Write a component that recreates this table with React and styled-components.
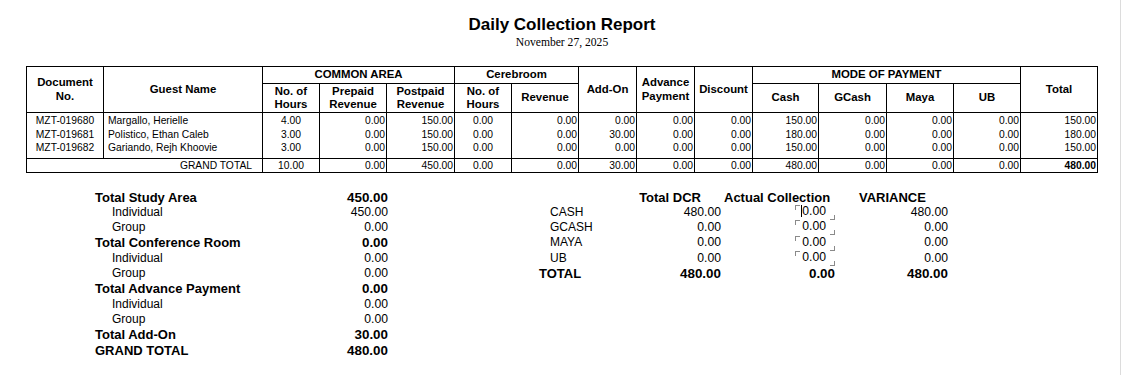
import React from "react";
import styled, { createGlobalStyle } from "styled-components";

const Global = createGlobalStyle`
  html, body { margin: 0; padding: 0; background: #fff; overflow: hidden; }
  body { font-family: "Liberation Sans", Arial, sans-serif; color: #000; }
`;

const Page = styled.div`
  width: 1120px;
  height: 375px;
  border-right: 1px solid #dcdcdc;
  background: #fff;
`;

const Report = styled.div`
  padding: 15px 0 0 26px;
  width: 1072px;
`;

const Heading = styled.header`
  text-align: center;
`;

const Title = styled.h1`
  margin: 0;
  font-size: 17px;
  line-height: 20px;
  font-weight: bold;
`;

const DateLine = styled.div`
  margin-top: 1px;
  font-family: "Liberation Serif", "Times New Roman", serif;
  font-size: 11.6px;
  line-height: 14px;
`;

const Table = styled.table`
  margin-top: 16px;
  border-collapse: collapse;
  table-layout: fixed;
  width: 1071px;
  font-size: 10.3px;
`;

const HeadCell = styled.th`
  border: 1px solid #000;
  font-size: 11.4px;
  font-weight: bold;
  line-height: 13.5px;
  text-align: center;
  vertical-align: middle;
  padding: 0 1px;
  height: ${(p) => p.$h || 0}px;
`;

const BodyRow = styled.tr`
  & > td {
    padding-top: ${(p) => (p.$first ? "1px" : "0")};
    padding-bottom: ${(p) => (p.$last ? "3px" : "0")};
  }
`;

const Cell = styled.td`
  border-left: 1px solid #000;
  border-right: 1px solid #000;
  line-height: 13.5px;
  white-space: nowrap;
  overflow: hidden;
  text-align: ${(p) => p.$align || "right"};
  padding-left: ${(p) => (p.$align === "left" ? "4px" : "1px")};
  padding-right: 1px;
`;

const TotalCell = styled.td`
  border: 1px solid #000;
  height: 13px;
  line-height: 13px;
  white-space: nowrap;
  font-weight: ${(p) => (p.$bold ? "bold" : "normal")};
  text-align: ${(p) => p.$align || "right"};
  padding: 0 ${(p) => (p.$label ? "10px" : "1px")} 0 1px;
`;

const Summary = styled.section`
  display: flex;
  margin-top: 17px;
  padding-left: 69px;
`;

const LeftBlock = styled.div`
  width: 293px;
  display: grid;
  grid-template-columns: 1fr auto;
  grid-auto-rows: 15.33px;
  align-items: center;
`;

const SumLabel = styled.div`
  font-size: ${(p) => (p.$bold ? "13px" : "12px")};
  font-weight: ${(p) => (p.$bold ? "bold" : "normal")};
  padding-left: ${(p) => (p.$indent ? "17px" : "0")};
  line-height: 15.33px;
  white-space: nowrap;
`;

const SumValue = styled.div`
  font-size: ${(p) => (p.$bold ? "13.4px" : "12.2px")};
  font-weight: ${(p) => (p.$bold ? "bold" : "normal")};
  text-align: right;
  line-height: 15.33px;
`;

const RightBlock = styled.div`
  margin-left: 151px;
  display: grid;
  grid-template-columns: 82px 100px 114px 113px;
  grid-auto-rows: 15.33px;
  align-items: center;
`;

const ColHead = styled.div`
  font-size: 13px;
  font-weight: bold;
  line-height: 15.33px;
  white-space: nowrap;
  text-align: ${(p) => p.$align || "left"};
  padding-left: ${(p) => p.$pl || 0}px;
  padding-right: ${(p) => p.$pr || 0}px;
`;

const Mode = styled.div`
  font-size: ${(p) => (p.$bold ? "13px" : "12px")};
  font-weight: ${(p) => (p.$bold ? "bold" : "normal")};
  padding-left: ${(p) => (p.$bold ? 0 : 11)}px;
  line-height: 15.33px;
`;

const Amount = styled.div`
  font-size: ${(p) => (p.$bold ? "13.4px" : "12.2px")};
  font-weight: ${(p) => (p.$bold ? "bold" : "normal")};
  text-align: right;
  line-height: 15.33px;
`;

const InputBox = styled.div`
  justify-self: end;
  position: relative;
  width: 40px;
  height: 13px;
  margin-top: -2px;
  box-sizing: border-box;
  padding-right: 9px;
  font-size: 12.2px;
  line-height: 15px;
  text-align: right;
  display: flex;
  justify-content: flex-end;
  align-items: center;

  &::before,
  &::after {
    content: "";
    position: absolute;
    width: 4px;
    height: 4px;
    border-color: #8a8a8a;
    border-style: solid;
  }
  &::before {
    left: 0;
    top: 0;
    border-width: 1px 0 0 1px;
  }
  &::after {
    right: 0;
    bottom: -2px;
    border-width: 0 1px 1px 0;
  }
`;

const Caret = styled.span`
  display: inline-block;
  width: 0;
  height: 12px;
  border-left: 1px solid #000;
`;

const cols = [77, 159, 57, 67, 68, 57, 67, 58, 58, 58, 66, 68, 67, 67, 77];

const rows = [
  ["MZT-019680", "Margallo, Herielle", "4.00", "0.00", "150.00", "0.00", "0.00", "0.00", "0.00", "0.00", "150.00", "0.00", "0.00", "0.00", "150.00"],
  ["MZT-019681", "Polistico, Ethan Caleb", "3.00", "0.00", "150.00", "0.00", "0.00", "30.00", "0.00", "0.00", "180.00", "0.00", "0.00", "0.00", "180.00"],
  ["MZT-019682", "Gariando, Rejh Khoovie", "3.00", "0.00", "150.00", "0.00", "0.00", "0.00", "0.00", "0.00", "150.00", "0.00", "0.00", "0.00", "150.00"],
];

const grand = ["10.00", "0.00", "450.00", "0.00", "0.00", "30.00", "0.00", "0.00", "480.00", "0.00", "0.00", "0.00", "480.00"];

const align = ["center", "left", "center", "right", "right", "center", "right", "right", "right", "right", "right", "right", "right", "right", "right"];
const grandAlign = ["center", "right", "right", "center", "right", "right", "right", "right", "right", "right", "right", "right", "right"];

const summary = [
  { label: "Total Study Area", value: "450.00", bold: true },
  { label: "Individual", value: "450.00", indent: true },
  { label: "Group", value: "0.00", indent: true },
  { label: "Total Conference Room", value: "0.00", bold: true },
  { label: "Individual", value: "0.00", indent: true },
  { label: "Group", value: "0.00", indent: true },
  { label: "Total Advance Payment", value: "0.00", bold: true },
  { label: "Individual", value: "0.00", indent: true },
  { label: "Group", value: "0.00", indent: true },
  { label: "Total Add-On", value: "30.00", bold: true },
  { label: "GRAND TOTAL", value: "480.00", bold: true },
];

const modes = [
  { mode: "CASH", dcr: "480.00", actual: "0.00", variance: "480.00", focused: true },
  { mode: "GCASH", dcr: "0.00", actual: "0.00", variance: "0.00" },
  { mode: "MAYA", dcr: "0.00", actual: "0.00", variance: "0.00" },
  { mode: "UB", dcr: "0.00", actual: "0.00", variance: "0.00" },
];

export default function App() {
  return (
    <Page>
      <Global />
      <Report>
        <Heading>
          <Title>Daily Collection Report</Title>
          <DateLine>November 27, 2025</DateLine>
        </Heading>
        <Table>
          <colgroup>
            {cols.map((w, i) => (
              <col key={i} style={{ width: w }} />
            ))}
          </colgroup>
          <thead>
            <tr>
              <HeadCell rowSpan={2} $h={16}>Document<br />No.</HeadCell>
              <HeadCell rowSpan={2}>Guest Name</HeadCell>
              <HeadCell colSpan={3} $h={16}>COMMON AREA</HeadCell>
              <HeadCell colSpan={2}>Cerebroom</HeadCell>
              <HeadCell rowSpan={2}>Add-On</HeadCell>
              <HeadCell rowSpan={2}>Advance<br />Payment</HeadCell>
              <HeadCell rowSpan={2}>Discount</HeadCell>
              <HeadCell colSpan={4}>MODE OF PAYMENT</HeadCell>
              <HeadCell rowSpan={2}>Total</HeadCell>
            </tr>
            <tr>
              <HeadCell $h={28}>No. of<br />Hours</HeadCell>
              <HeadCell>Prepaid<br />Revenue</HeadCell>
              <HeadCell>Postpaid<br />Revenue</HeadCell>
              <HeadCell>No. of<br />Hours</HeadCell>
              <HeadCell>Revenue</HeadCell>
              <HeadCell>Cash</HeadCell>
              <HeadCell>GCash</HeadCell>
              <HeadCell>Maya</HeadCell>
              <HeadCell>UB</HeadCell>
            </tr>
          </thead>
          <tbody>
            {rows.map((r, ri) => (
              <BodyRow key={ri} $first={ri === 0} $last={ri === rows.length - 1}>
                {r.map((v, ci) => (
                  <Cell key={ci} $align={align[ci]}>{v}</Cell>
                ))}
              </BodyRow>
            ))}
            <tr>
              <TotalCell colSpan={2} $label>GRAND TOTAL</TotalCell>
              {grand.map((v, ci) => (
                <TotalCell key={ci} $align={grandAlign[ci]} $bold={ci === grand.length - 1}>{v}</TotalCell>
              ))}
            </tr>
          </tbody>
        </Table>
        <Summary>
          <LeftBlock>
            {summary.map((s, i) => (
              <React.Fragment key={i}>
                <SumLabel $bold={s.bold} $indent={s.indent}>{s.label}</SumLabel>
                <SumValue $bold={s.bold}>{s.value}</SumValue>
              </React.Fragment>
            ))}
          </LeftBlock>
          <RightBlock>
            <div />
            <ColHead $align="right" $pr={20}>Total DCR</ColHead>
            <ColHead $pl={3}>Actual Collection</ColHead>
            <ColHead $pl={24}>VARIANCE</ColHead>
            {modes.map((m) => (
              <React.Fragment key={m.mode}>
                <Mode>{m.mode}</Mode>
                <Amount>{m.dcr}</Amount>
                <InputBox>
                  {m.focused && <Caret />}
                  {m.actual}
                </InputBox>
                <Amount>{m.variance}</Amount>
              </React.Fragment>
            ))}
            <Mode $bold>TOTAL</Mode>
            <Amount $bold>480.00</Amount>
            <Amount $bold>0.00</Amount>
            <Amount $bold>480.00</Amount>
          </RightBlock>
        </Summary>
      </Report>
    </Page>
  );
}
